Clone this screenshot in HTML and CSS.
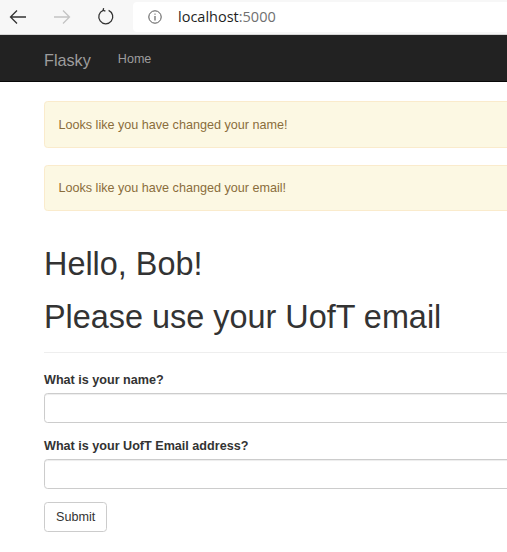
FILE: index.html
```html
<!DOCTYPE html>
<html>
<head>
<meta charset="utf-8">
<title>Flasky</title>
<link rel="stylesheet" href="styles.css">
</head>
<body>
<div class="toolbar">
  <div class="tb-btn">
    <svg width="20" height="20" viewBox="0 0 20 20"><path d="M18 10H2.5M9 3.5L2.5 10L9 16.5" fill="none" stroke="#333" stroke-width="1.3"/></svg>
  </div>
  <div class="tb-btn">
    <svg width="20" height="20" viewBox="0 0 20 20"><path d="M2 10H17.5M11 3.5L17.5 10L11 16.5" fill="none" stroke="#c4c4c4" stroke-width="1.3"/></svg>
  </div>
  <div class="tb-btn">
    <svg width="20" height="20" viewBox="0 0 20 20"><path d="M7.2 3.3A7 7 0 1 0 12.6 3.4" fill="none" stroke="#333" stroke-width="1.3"/><path d="M7.6 1.2L7.2 3.3L9.4 4.2" fill="none" stroke="#333" stroke-width="1.3"/></svg>
  </div>
  <div class="address">
    <svg class="info" width="14" height="14" viewBox="0 0 14 14"><circle cx="7" cy="7" r="6.2" fill="none" stroke="#555" stroke-width="1"/><path d="M7 6V10.5" stroke="#555" stroke-width="1.1"/><circle cx="7" cy="4.1" r="0.7" fill="#555"/></svg>
    <span class="host">localhost</span><span class="port">:5000</span>
  </div>
</div>
<nav class="navbar">
  <a class="brand">Flasky</a>
  <a class="nav-link">Home</a>
</nav>
<main class="container">
  <div class="alert">Looks like you have changed your name!</div>
  <div class="alert">Looks like you have changed your email!</div>
  <div class="page-header">
    <h1>Hello, Bob!</h1>
    <h1>Please use your UofT email</h1>
  </div>
  <form class="form">
    <div class="form-group">
      <label class="label">What is your name?</label>
      <input class="input" type="text">
    </div>
    <div class="form-group">
      <label class="label">What is your UofT Email address?</label>
      <input class="input" type="text">
    </div>
    <button class="btn" type="button">Submit</button>
  </form>
</main>
</body>
</html>
```
FILE: styles.css
```css
html, body {
  margin: 0;
  padding: 0;
  overflow: hidden;
  background: #fff;
}
body {
  font-family: "Liberation Sans", Arial, sans-serif;
  font-size: 12.6px;
  line-height: 18px;
  color: #333;
  width: 507px;
}
.toolbar {
  height: 34px;
  background: #f7f7f7;
  border-bottom: 1px solid #d6d6d6;
  display: flex;
  align-items: center;
  gap: 8px;
}
.tb-btn {
  width: 36px;
  height: 34px;
  display: flex;
  align-items: center;
  justify-content: center;
  flex: none;
}
.address {
  margin-left: 1px;
  flex: 1;
  height: 30px;
  background: #fff;
  border-radius: 4px 0 0 4px;
  display: flex;
  align-items: center;
  font-family: "Open Sans", "Noto Sans", sans-serif;
  font-size: 14.5px;
}
.info {
  margin-left: 15px;
  margin-right: 16px;
}
.host { color: #1f1f1f; }
.port { color: #707070; }
.navbar {
  height: 46px;
  background: #222;
  border-bottom: 1px solid #080808;
  display: flex;
  align-items: center;
  padding-left: 44px;
}
.brand {
  font-size: 16.2px;
  color: #9d9d9d;
  margin-right: 27px;
  margin-top: 3px;
}
.nav-link {
  font-size: 12.6px;
  color: #9d9d9d;
  margin-top: 2px;
}
.container {
  margin-left: 44px;
  width: 648px;
  padding-top: 19px;
}
.alert {
  padding: 13.5px 13.5px 13px;
  border: 1px solid #faebcc;
  border-radius: 3.6px;
  background: #fcf8e3;
  color: #8a6d3b;
  margin-bottom: 17px;
}
.page-header {
  margin-top: 36px;
  padding-bottom: 8px;
  border-bottom: 1px solid #eee;
  margin-bottom: 18px;
}
h1 {
  font-size: 32.4px;
  line-height: 35.6px;
  font-weight: 500;
  margin: 17px 0 9px;
  color: #333;
}
.page-header h1:first-child {
  margin-top: 0;
}
.form-group {
  margin-bottom: 13.5px;
}
.label {
  display: inline-block;
  font-weight: bold;
  margin-bottom: 4px;
}
.input {
  display: block;
  box-sizing: border-box;
  width: 100%;
  height: 30px;
  border: 1px solid #ccc;
  border-radius: 3.6px;
  box-shadow: inset 0 1px 1px rgba(0,0,0,.075);
  padding: 5px 11px;
  font: inherit;
  margin: 0;
}
.btn {
  display: inline-block;
  font-family: inherit;
  font-size: 12.6px;
  line-height: 18px;
  height: 30px;
  padding: 5px 11px;
  border: 1px solid #ccc;
  border-radius: 3.6px;
  background: #fff;
  color: #333;
  margin: 0;
}
```
